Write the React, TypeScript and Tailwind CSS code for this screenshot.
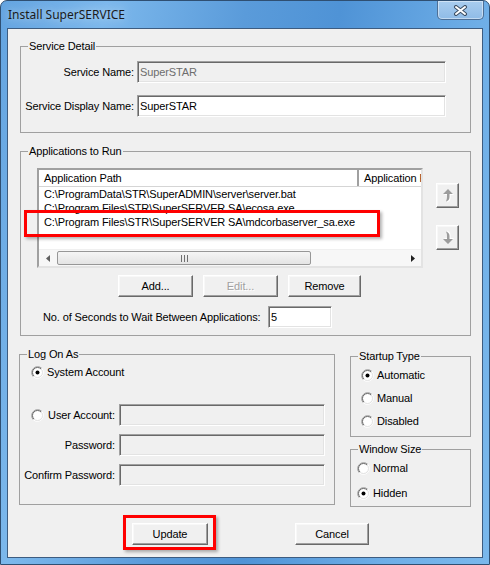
import type { ReactNode } from "react";

// classic 3D edges used by the dialog controls
const sunken =
  "border border-t-[#a0a0a0] border-l-[#a0a0a0] border-r-white border-b-white shadow-[inset_1px_1px_0_#696969,inset_-1px_-1px_0_#e3e3e3]";
const raised =
  "border border-t-white border-l-white border-r-[#696969] border-b-[#696969] shadow-[inset_-1px_-1px_0_#a0a0a0,inset_1px_1px_0_#f8f8f8]";

function Radio({ checked = false }: { checked?: boolean }) {
  return (
    <svg width="13" height="13" viewBox="0 0 13 13" className="shrink-0">
      <circle cx="6.5" cy="6.5" r="5" fill="#fff" />
      <path d="M2.26 10.74 A6 6 0 0 1 10.74 2.26" fill="none" stroke="#a0a0a0" />
      <path d="M10.74 2.26 A6 6 0 0 1 2.26 10.74" fill="none" stroke="#fff" />
      <path d="M2.96 10.04 A5 5 0 0 1 10.04 2.96" fill="none" stroke="#696969" />
      <path d="M10.04 2.96 A5 5 0 0 1 2.96 10.04" fill="none" stroke="#e3e3e3" />
      {checked && <circle cx="6.5" cy="6.5" r="2" fill="#000" />}
    </svg>
  );
}

function Group({
  title,
  className = "",
  children,
}: {
  title: string;
  className?: string;
  children: ReactNode;
}) {
  return (
    <fieldset className={`border border-[#a0a0a0] min-w-0 ${className}`}>
      <legend className="ml-[7px] px-[1px] leading-[13px]">{title}</legend>
      {children}
    </fieldset>
  );
}

function Field({ value = "", disabled = false, className = "" }: { value?: string; disabled?: boolean; className?: string }) {
  return (
    <div
      className={`h-[22px] ${sunken} ${disabled ? "bg-[#f0f0f0] text-[#6d6d6d]" : "bg-white"} pl-[2px] flex items-center whitespace-nowrap ${className}`}
    >
      {value}
    </div>
  );
}

function Button({ label, disabled = false, className = "" }: { label: string; disabled?: boolean; className?: string }) {
  return (
    <div
      className={`h-[22px] ${raised} bg-[#f0f0f0] flex items-center justify-center ${
        disabled ? "text-[#a0a0a0] [text-shadow:1px_1px_0_#fff]" : ""
      } ${className}`}
    >
      {label}
    </div>
  );
}

function MoveIcon({ down = false }: { down?: boolean }) {
  return (
    <svg width="12" height="15" viewBox="0 0 12 15" className={down ? "-scale-y-100" : ""}>
      <path d="M7 2 L12 7 H8.5 V10 Q8.5 13.5 5 14.5 Q6 12.5 6 10 V7 H2 Z" fill="#fff" />
      <path d="M6 1 L11 6 H7.5 V9 Q7.5 12.5 4 13.5 Q5 11.5 5 9 V6 H1 Z" fill="#9c9c9c" />
    </svg>
  );
}

function ScrollBar() {
  return (
    <div className="mt-auto h-[17px] flex bg-[#f7f7f7] border-t border-[#f0f0f0]">
      <div className="w-[17px] flex items-center justify-center">
        <svg width="4" height="7" viewBox="0 0 4 7">
          <path d="M4 0 V7 L0 3.5 Z" fill="#606060" />
        </svg>
      </div>
      <div className="ml-[1px] w-[254px] my-[1px] rounded-[2px] border border-[#979797] bg-[linear-gradient(#f5f5f5,#e4e4e4)] flex items-center justify-center">
        <svg width="7" height="7" viewBox="0 0 7 7">
          <path d="M0.5 0 V7 M3.5 0 V7 M6.5 0 V7" stroke="#707070" />
        </svg>
      </div>
      <div className="flex-1" />
      <div className="w-[17px] flex items-center justify-center">
        <svg width="4" height="7" viewBox="0 0 4 7">
          <path d="M0 0 V7 L4 3.5 Z" fill="#202020" />
        </svg>
      </div>
    </div>
  );
}

const apps = [
  "C:\\ProgramData\\STR\\SuperADMIN\\server\\server.bat",
  "C:\\Program Files\\STR\\SuperSERVER SA\\ecosa.exe",
  "C:\\Program Files\\STR\\SuperSERVER SA\\mdcorbaserver_sa.exe",
];

export default function App() {
  return (
    <div className="w-[490px] h-[565px] rounded-t-[7px] border border-[#2f4f72] bg-[linear-gradient(100deg,#64a4e0_0%,#7cb8ec_18%,#5a9bda_42%,#4f93d6_58%,#6eaee7_82%,#7ab8ec_100%)] flex flex-col font-['Liberation_Sans',Arial,sans-serif] text-[11px] tracking-[-0.12px] text-black">
      {/* title bar */}
      <div className="h-[27px] flex justify-between">
        <div className="pl-[7px] pt-[6px] leading-[16px] text-[12px] tracking-normal text-[#1b1b1b] font-['Noto_Sans',sans-serif] [text-shadow:0_0_8px_rgba(255,255,255,0.7)]">
          Install SuperSERVICE
        </div>
        <div className="mr-[5px] w-[47px] h-[19px] rounded-b-[5px] border border-t-0 border-[#4d6f96] bg-[linear-gradient(#a9cdef,#8fbbe6)] shadow-[inset_0_0_0_1px_rgba(255,255,255,0.45)] flex items-center justify-center">
          <svg width="15" height="11" viewBox="0 0 15 11">
            <path d="M3 2 L12 9 M12 2 L3 9" stroke="#3b4d62" strokeWidth="4" strokeLinecap="round" />
            <path d="M3 2 L12 9 M12 2 L3 9" stroke="#fff" strokeWidth="2" strokeLinecap="round" />
          </svg>
        </div>
      </div>

      {/* client area */}
      <div className="mx-[6px] h-[530px] border border-[#3d5c80] bg-[#f0f0f0] relative flex flex-col">
        <Group title="Service Detail" className="ml-[12px] mt-[11px] w-[451px] pb-[15px]">
          <div className="mt-[8px] grid grid-cols-[113px_309px] gap-x-[3px] gap-y-[12px] items-center">
            <div className="text-right whitespace-nowrap">Service Name:</div>
            <Field value="SuperSTAR" disabled />
            <div className="text-right whitespace-nowrap">Service Display Name:</div>
            <Field value="SuperSTAR" />
          </div>
        </Group>

        <Group title="Applications to Run" className="ml-[12px] mt-[12px] w-[451px] pb-[7px]">
          <div className="mt-[10px] ml-[16px] flex">
            <div className="relative w-[386px] h-[100px] border-2 border-t-[#a0a0a0] border-l-[#a0a0a0] border-r-[#e3e3e3] border-b-[#e3e3e3] bg-white flex flex-col">
              <div className="h-[17px] flex shrink-0 bg-white border-b border-[#d5d5d5]">
                <div className="w-[319px] pl-[5px] flex items-center border-r border-[#a0a0a0] shadow-[1px_0_0_#fff]">
                  Application Path
                </div>
                <div className="flex-1 pl-[5px] flex items-center overflow-hidden whitespace-nowrap border-l border-[#a0a0a0]">
                  Application Parameters
                </div>
              </div>
              {apps.map((a) => (
                <div key={a} className="h-[14px] leading-[14px] pl-[5px] whitespace-nowrap overflow-hidden">
                  {a}
                </div>
              ))}
              <ScrollBar />
            </div>
            <div className="ml-[13px] mt-[15px] flex flex-col gap-[17px]">
              <div className={`w-[23px] h-[25px] ${raised} flex items-center justify-center`}>
                <MoveIcon />
              </div>
              <div className={`w-[23px] h-[25px] ${raised} flex items-center justify-center`}>
                <MoveIcon down />
              </div>
            </div>
          </div>
          <div className="mt-[7px] ml-[97px] flex gap-[10px]">
            <Button label="Add..." className="w-[75px]" />
            <Button label="Edit..." disabled className="w-[75px]" />
            <Button label="Remove" className="w-[73px]" />
          </div>
          <div className="mt-[9px] ml-[22px] flex items-center">
            <div className="w-[225px] whitespace-nowrap">No. of Seconds to Wait Between Applications:</div>
            <Field value="5" className="w-[64px]" />
          </div>
        </Group>

        <div className="mt-[12px] flex items-start">
          <Group title="Log On As" className="ml-[11px] w-[316px] pb-[18px]">
            <div className="mt-[5px] ml-[11px] h-[13px] flex items-center gap-[3px]">
              <Radio checked />
              <span>System Account</span>
            </div>
            <div className="mt-[25px] grid grid-cols-[95px_206px] gap-x-[4px] gap-y-[8px] items-center">
              <div className="pl-[11px] flex items-center justify-between whitespace-nowrap">
                <Radio />
                <span>User Account:</span>
              </div>
              <Field disabled />
              <div className="text-right whitespace-nowrap">Password:</div>
              <Field disabled />
              <div className="text-right whitespace-nowrap">Confirm Password:</div>
              <Field disabled />
            </div>
          </Group>

          <div className="ml-[15px] mt-[2px] w-[121px] flex flex-col">
            <Group title="Startup Type" className="pb-[8px]">
              <div className="mt-[6px] ml-[10px] flex flex-col gap-[10px]">
                {["Automatic", "Manual", "Disabled"].map((s, i) => (
                  <div key={s} className="h-[13px] flex items-center gap-[3px]">
                    <Radio checked={i === 0} />
                    <span>{s}</span>
                  </div>
                ))}
              </div>
            </Group>
            <Group title="Window Size" className="mt-[6px] pb-[6px]">
              <div className="mt-[6px] ml-[6px] flex flex-col gap-[12px]">
                {["Normal", "Hidden"].map((s, i) => (
                  <div key={s} className="h-[13px] flex items-center gap-[3px]">
                    <Radio checked={i === 1} />
                    <span>{s}</span>
                  </div>
                ))}
              </div>
            </Group>
          </div>
        </div>

        <div className="mt-[16px] flex">
          <Button label="Update" className="ml-[124px] w-[76px]" />
          <Button label="Cancel" className="ml-[87px] w-[74px]" />
        </div>

        {/* highlight frames */}
        <div className="absolute left-[16px] top-[181px] w-[356px] h-[27px] border-[3px] border-[#ff0000] shadow-[2px_2px_3px_rgba(0,0,0,0.3)] pointer-events-none" />
        <div className="absolute left-[115px] top-[486px] w-[93px] h-[35px] border-[3px] border-[#ff0000] shadow-[2px_2px_3px_rgba(0,0,0,0.3)] pointer-events-none" />
      </div>
    </div>
  );
}
